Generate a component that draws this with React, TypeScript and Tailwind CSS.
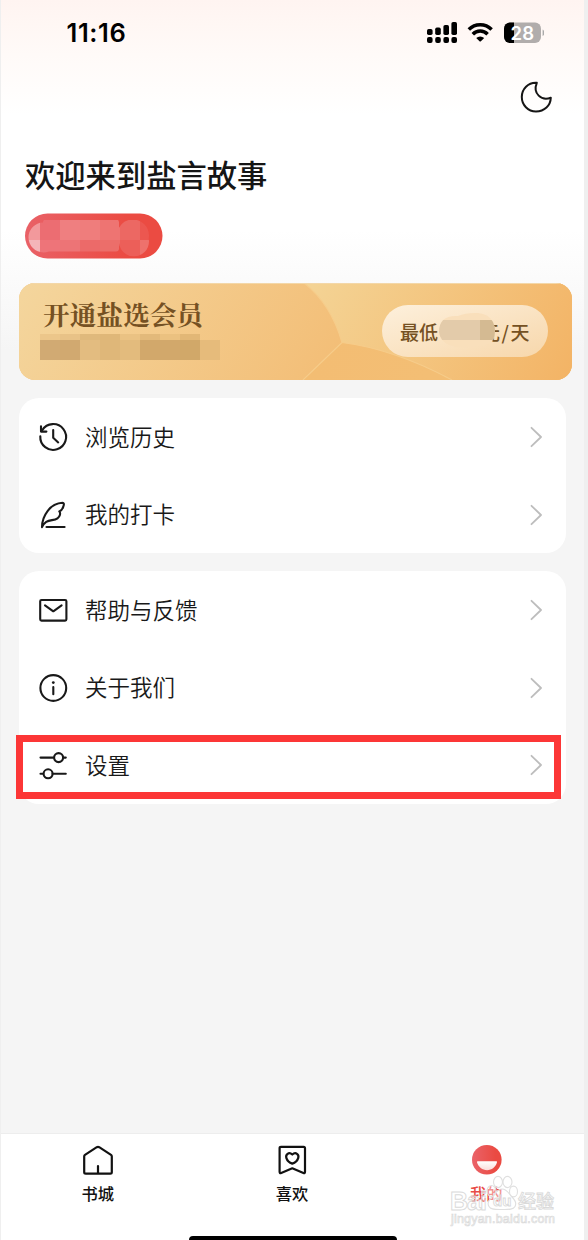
import type { ReactNode } from "react";

const sans = "font-['Noto_Sans_CJK_SC','Noto_Sans',sans-serif]";

function Glyph({ children, size = 32, width = 2.2 }: { children: ReactNode; size?: number; width?: number }) {
  return (
    <svg width={size} height={size} viewBox="0 0 32 32" fill="none" stroke="currentColor" strokeWidth={width} strokeLinecap="round" strokeLinejoin="round" className="shrink-0">
      {children}
    </svg>
  );
}

const historyIcon = (
  <Glyph width={2.1}>
    <path d="M5.2 9.2A12.9 12.9 0 1 1 3.3 15.2" />
    <path d="M4 5.2v5.4h5.4" />
    <path d="M16.2 9v7.800l5 4.600" />
  </Glyph>
);

const quillIcon = (
  <Glyph width={2.1}>
    <path d="M5 28.200c0-11 8-24 20.500-24.400c1.600 0 1.600 1.500 1 3.200c-.8 2.400-1.200 4.400-4.200 5.400c1.700 2 .5 5.400-1.800 7c-3.400 2.400-7.400 1-11.300 3.400c-2 1.300-3.200 3-4.200 5.400Z" />
    <path d="M9.500 28H27.600" />
  </Glyph>
);

const mailIcon = (
  <Glyph width={2.1}>
    <rect x="3.200" y="6" width="26.200" height="20.600" rx="1.300" />
    <path d="M8 11.400l8.300 5.900l8.300-5.900" />
  </Glyph>
);

const infoIcon = (
  <Glyph width={2.1}>
    <circle cx="16.300" cy="16" r="12.900" />
    <path d="M16.300 15v7.200" />
    <circle cx="16.300" cy="10.600" r="1.400" fill="currentColor" stroke="none" />
  </Glyph>
);

const slidersIcon = (
  <Glyph width={2.1}>
    <path d="M3.500 8.600h13.200M26.200 8.600h2.600M3.500 24.800h2.600M15.600 24.800h13.200" />
    <circle cx="21.600" cy="8.600" r="4.500" />
    <circle cx="11.100" cy="24.800" r="4.500" />
  </Glyph>
);

function Row({ icon, label }: { icon: ReactNode; label: string }) {
  return (
    <div className="flex h-[77.8px] items-center pl-[18px] pr-5 text-[#191919]">
      {icon}
      <span className="mb-0.5 ml-4 flex-1 text-[22.5px] leading-none font-[350]">{label}</span>
      <svg width="12" height="22" viewBox="0 0 12 22" fill="none" stroke="#bdbdbd" strokeWidth="1.8" strokeLinecap="round" strokeLinejoin="round" className="mr-1">
        <path d="M1.5 1.8L11 11L1.5 20.2" />
      </svg>
    </div>
  );
}

function StatusBar() {
  return (
    <header className="flex h-[66px] items-center justify-between pl-[65.5px] pr-10">
      <span className="font-['Inter',sans-serif] text-[25.5px] leading-none font-semibold tracking-[0.6px] text-black">11:16</span>
      <svg width="118" height="24" viewBox="426 21 118 24">
        <g fill="#000">
          <rect x="427" y="29" width="5.6" height="6" rx="1.7" />
          <rect x="435.2" y="27.5" width="5.6" height="7.5" rx="1.7" />
          <rect x="443.4" y="25" width="5.6" height="10" rx="1.7" />
          <rect x="451.4" y="22" width="5.6" height="13" rx="1.7" />
          <rect x="427" y="37" width="5.6" height="6" rx="2" />
          <rect x="435.2" y="37" width="5.6" height="6" rx="2" />
          <rect x="443.4" y="37" width="5.6" height="6" rx="2" />
          <rect x="451.4" y="37" width="5.6" height="6" rx="2" />
        </g>
        <g fill="none" stroke="#000" strokeWidth="3.5">
          <path d="M468.8 29.6A16 16 0 0 1 491.6 29.6" />
          <path d="M472.8 34.2A10.4 10.4 0 0 1 487.6 34.2" />
        </g>
        <path d="M476.2 38A5.8 5.8 0 0 1 484.2 38L480.9 41.2Q480.2 41.9 479.5 41.2Z" />
        <clipPath id="battery"><rect x="504" y="22.5" width="37" height="20.5" rx="6" /></clipPath>
        <g clipPath="url(#battery)">
          <rect x="504" y="22" width="38" height="22" fill="#b1adac" />
          <rect x="504" y="22" width="10" height="22" fill="#000" />
        </g>
        <path d="M542.6 29.5q2 1 2 3.2t-2 3.2Z" fill="#aaa" />
        <text x="522.3" y="39.5" textAnchor="middle" fill="#fff" fontSize="18.5" fontWeight="600" fontFamily="Inter, sans-serif">28</text>
      </svg>
    </header>
  );
}

const tagTiles: [number, number, string][] = [
  [20, 220, "#f2999c"], [40, 220, "#ec6d72"], [60, 220, "#ef7f80"], [80, 220, "#ef7d7c"], [100, 220, "#ee7472"], [120, 220, "#ec6863"], [140, 220, "#ec5750"],
  [20, 240, "#f4b5b9"], [40, 240, "#ee7479"], [60, 240, "#ed7476"], [80, 240, "#ec6a69"], [100, 240, "#ec6e6a"], [120, 240, "#ec5f59"], [140, 240, "#ee716c"],
];

function NameTag() {
  return (
    <svg width="138" height="46" viewBox="25 213.5 138 46" className="ml-6">
      <defs>
        <linearGradient id="tag" x1="0" y1="0" x2="1" y2="0">
          <stop offset="0" stopColor="#e96167" />
          <stop offset="0.75" stopColor="#eb4b42" />
          <stop offset="1" stopColor="#eb4b42" />
        </linearGradient>
        <clipPath id="smudge">
          <circle cx="43.5" cy="238" r="15" />
          <rect x="43" y="220" width="76" height="32" rx="3" />
          <circle cx="133" cy="236" r="16" />
          <circle cx="134" cy="242" r="15" />
        </clipPath>
      </defs>
      <rect x="25" y="214" width="137.5" height="45" rx="22.5" fill="url(#tag)" />
      <g clipPath="url(#smudge)" shapeRendering="crispEdges">
        {tagTiles.map(([x, y, c]) => (
          <rect key={`${x}-${y}`} x={x} y={y} width="20" height="20" fill={c} />
        ))}
      </g>
    </svg>
  );
}

const lineTiles = ["#d1aa73", "#d1a970", "#e3bc80", "#dfb779", "#e3bb7d", "#d2a86b", "#d2a86b", "#d1a869", "#e6bb7b"];
const faintTiles = ["#ecc68a", "#e8c287", "#dfb97c", "#dfb778", "#eac283", "#e2b97a", "#ebc180", "#e2b776"];

function MemberBanner() {
  return (
    <section className="relative ml-[18px] flex h-[97px] w-[553px] items-center justify-between overflow-hidden rounded-2xl bg-[#f3c47f]">
      <svg width="553" height="97" viewBox="19 283 553 97" className="absolute inset-0">
        <defs>
          <linearGradient id="goldLeft" gradientUnits="userSpaceOnUse" x1="40" y1="270" x2="290" y2="430">
            <stop offset="0" stopColor="#f4d59c" />
            <stop offset="1" stopColor="#f3be77" />
          </linearGradient>
          <linearGradient id="goldRight" gradientUnits="userSpaceOnUse" x1="320" y1="270" x2="560" y2="390">
            <stop offset="0" stopColor="#f4d394" />
            <stop offset="1" stopColor="#f3b466" />
          </linearGradient>
          <linearGradient id="goldLow" gradientUnits="userSpaceOnUse" x1="320" y1="345" x2="430" y2="380">
            <stop offset="0" stopColor="#f3bd73" />
            <stop offset="1" stopColor="#f3be74" />
          </linearGradient>
        </defs>
        <rect x="19" y="283" width="553" height="97" fill="url(#goldLeft)" />
        <path d="M304 283Q331 304 342 342.5L303 380H572V283Z" fill="url(#goldRight)" />
        <path d="M303 380L342 342.5Q394 349 452 380Z" fill="url(#goldLow)" />
        <path d="M304 283Q331 304 342 342.5L303 380M342 342.5Q394 349 452 380" fill="none" stroke="#f6cc8a" strokeWidth="1.1" />
        <path d="M19 283.5H572" stroke="#f3d7a8" />
        <g shapeRendering="crispEdges">
          {faintTiles.map((c, i) => (
            <rect key={i} x={40 + i * 20} y="334" width="20" height="6" fill={c} />
          ))}
          {lineTiles.map((c, i) => (
            <rect key={i} x={40 + i * 20} y="340" width="20" height="20" fill={c} />
          ))}
        </g>
      </svg>
      <h2 className="relative -mt-[34px] ml-6 font-['Noto_Serif_CJK_SC','Noto_Sans_CJK_SC',serif] text-[26.7px] leading-none font-bold text-[#755123]">开通盐选会员</h2>
      <div className="relative mr-6 mb-px h-[52px] w-[166px] overflow-hidden rounded-full bg-linear-to-br from-[#fdf0dc] to-[#f7d7ab]">
        <div className="flex h-full items-center justify-between pl-[18px] pr-[17px] text-[19px] leading-none font-medium text-[#755123]">
          <span>最低</span>
          <span className="tracking-[1.5px]">元/天</span>
        </div>
        <svg width="166" height="52" viewBox="382 305 166 52" className="absolute inset-0">
          <clipPath id="price"><path d="M439 332Q439 315 458 316Q466 312.500 478 313Q489 314 493 322Q497 331 493 340Q489 346 478 346Q461 350 449 345Q440 341 439 332Z" /></clipPath>
          <g clipPath="url(#price)" shapeRendering="crispEdges">
            <rect x="438" y="312" width="60" height="38" fill="#f9dfbb" />
            <rect x="438" y="320" width="42" height="20" fill="#e3cbaa" />
            <rect x="480" y="320" width="18" height="20" fill="#d4ba92" />
          </g>
        </svg>
      </div>
    </section>
  );
}

function Tab({ icon, label, active }: { icon: ReactNode; label: string; active?: boolean }) {
  return (
    <div className={`flex flex-1 flex-col items-center text-[16.3px] leading-none font-medium ${active ? "text-[#e94c48]" : "text-[#111]"}`}>
      {icon}
      <span className="mt-[9px] mr-px">{label}</span>
    </div>
  );
}

function Watermark() {
  return (
    <svg width="112" height="58" viewBox="448 1172 112 58" className="absolute top-[1172px] left-[447px]">
      <g fill="#fff" fillOpacity="0.4" stroke="#dfdfdf" strokeWidth="1.1">
        <ellipse cx="491.500" cy="1191" rx="4.5" ry="5.5" />
        <ellipse cx="498" cy="1182" rx="4.5" ry="5.6" />
        <ellipse cx="507.500" cy="1182" rx="4.5" ry="5.6" />
        <ellipse cx="513.5" cy="1191.500" rx="4" ry="5.4" />
        <path d="M502 1189c5 0 7 5 10 8s5 6 3 9.500s-7 3-13 3s-11 .5-13-3s0-7 3-9.500s5-8 10-8Z" />
      </g>
      <g fontFamily="'Liberation Sans', sans-serif" fontWeight="700" fill="#fff" fillOpacity="0.35" stroke="#dadada" strokeWidth="0.9">
        <text x="450" y="1209.500" fontSize="25" textLength="37">Bai</text>
        <text x="493" y="1206" fontSize="15">du</text>
        <text x="518" y="1208" fontSize="18" fontFamily="'Noto Sans CJK SC', sans-serif" fontWeight="500" textLength="36">经验</text>
        <text x="451" y="1222.500" fontSize="12.500" strokeWidth="0.7" fontWeight="400" textLength="104">jingyan.baidu.com</text>
      </g>
    </svg>
  );
}

export default function App() {
  return (
    <div className={`relative flex h-[1240px] w-[588px] flex-col overflow-hidden border-r-4 border-l border-[#efefef] bg-[#f5f5f5] ${sans}`}>
      <main className="flex h-[1133px] flex-col bg-[linear-gradient(180deg,#fff4f1_0px,#fff7f4_25px,#fffaf8_55px,#fffdfc_90px,#fff_115px,#fff_230px,#f5f5f5_350px)]">
        <StatusBar />
        <div className="flex h-[62px] justify-end pr-[31px]">
          <svg width="34" height="34" viewBox="519 80 34 34" fill="none" stroke="#151515" strokeWidth="2" strokeLinejoin="round" className="mt-3.5">
            <path d="M536.8 82.8C528 82.200 521.800 89.200 521.800 97C521.800 105 528 111.400 536 111.400C544.400 111.400 550.600 105.500 550.800 97.700C541.500 101.300 532.500 93.500 536.800 82.800Z" />
          </svg>
        </div>
        <div className="flex h-[85px] items-center">
          <h1 className="mt-2 ml-6 text-[30.3px] leading-none font-medium text-[#151515]">欢迎来到盐言故事</h1>
        </div>
        <div className="h-[70px]"><NameTag /></div>
        <MemberBanner />
        <section className="mt-[18px] ml-[18px] h-[155px] w-[547px] rounded-[20px] bg-white">
          <Row icon={historyIcon} label="浏览历史" />
          <Row icon={quillIcon} label="我的打卡" />
        </section>
        <section className="mt-[18px] ml-[18px] h-[233px] w-[547px] rounded-[20px] bg-white">
          <Row icon={mailIcon} label="帮助与反馈" />
          <Row icon={infoIcon} label="关于我们" />
          <Row icon={slidersIcon} label="设置" />
        </section>
      </main>
      <div className="absolute top-[735px] left-[15px] h-16 w-[545px] border-[7px] border-[#fc3636]" />
      <nav className="flex h-[107px] border-t border-[#ededed] bg-white pt-2.5">
        <Tab
          label="书城"
          icon={
            <Glyph>
              <path d="M2.200 12.500Q2.200 11.400 3 10.800L14.800 3.200Q16 2.500 17.200 3.200L29 10.800Q29.800 11.400 29.800 12.500V28.200Q29.800 29.600 28.200 29.600H3.800Q2.200 29.600 2.200 28.200Z" />
              <path d="M16 22V29" />
            </Glyph>
          }
        />
        <Tab
          label="喜欢"
          icon={
            <Glyph>
              <path d="M3.600 4.200Q3.600 2.800 5 2.800H27.600Q29 2.800 29 4.200V27.800Q29 29.600 27.400 28.900L16.300 24.300L5.200 28.900Q3.600 29.600 3.600 27.800Z" />
              <path d="M16.300 10.500C12.800 7.400 9.300 10.600 10.400 14.100C11.200 16.600 14.100 18.900 16.300 19.600C18.500 18.900 21.400 16.600 22.200 14.100C23.300 10.600 19.800 7.400 16.300 10.500Z" />
            </Glyph>
          }
        />
        <Tab
          active
          label="我的"
          icon={
            <svg width="32" height="32" viewBox="0 0 32 32">
              <defs>
                <linearGradient id="face"><stop stopColor="#ea6369" /><stop offset="0.8" stopColor="#ea4a42" /></linearGradient>
                <linearGradient id="smile" x1="0" y1="0" x2="0" y2="1"><stop stopColor="#fff" /><stop offset="1" stopColor="#fbdcda" /></linearGradient>
              </defs>
              <circle cx="15.800" cy="15.700" r="14.800" fill="url(#face)" />
              <path d="M6.800 17.200H25.300Q26.300 17.200 26 18.300C24.800 23 20.800 26.200 16.100 26.200S7.300 23 6 18.300Q5.800 17.200 6.800 17.200Z" fill="url(#smile)" />
            </svg>
          }
        />
      </nav>
      <Watermark />
      <div className="absolute top-[1236px] left-[188px] h-2 w-[208px] rounded-full bg-black" />
    </div>
  );
}
